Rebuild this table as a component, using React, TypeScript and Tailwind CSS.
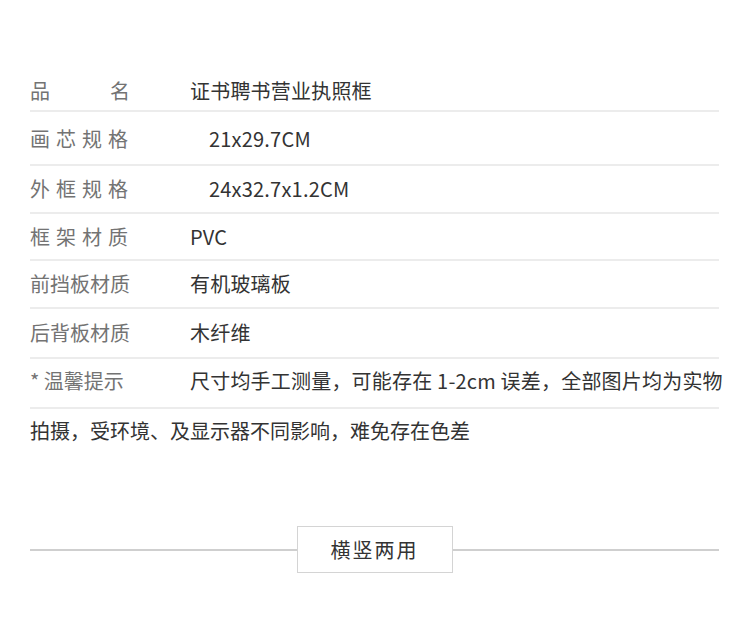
import React from "react";

const font = { fontFamily: '"Noto Sans CJK SC", "Noto Sans", sans-serif' };

type Row = { label: React.ReactNode; value: string; h: string; indent?: boolean; extra?: string };

const rows: Row[] = [
  {
    label: (
      <span className="flex w-[100px] justify-between">
        <span>品</span>
        <span>名</span>
      </span>
    ),
    value: "证书聘书营业执照框",
    h: "h-[41px]",
  },
  { label: <span className="tracking-[6px]">画芯规格</span>, value: "21x29.7CM", h: "h-[54px]", indent: true, extra: "pt-[2px]" },
  { label: <span className="tracking-[6px]">外框规格</span>, value: "24x32.7x1.2CM", h: "h-[48px]", indent: true },
  { label: <span className="tracking-[6px]">框架材质</span>, value: "PVC", h: "h-[47px]" },
  { label: <span>前挡板材质</span>, value: "有机玻璃板", h: "h-[48px]" },
  { label: <span>后背板材质</span>, value: "木纤维", h: "h-[50px]" },
  { label: <span>* 温馨提示</span>, value: "尺寸均手工测量，可能存在 1-2cm 误差，全部图片均为实物", h: "h-[50px]", extra: "pb-1" },
];

export default function App() {
  return (
    <div className="w-[750px] h-[620px] bg-white overflow-hidden" style={font}>
      <div className="ml-[30px] w-[689px] pt-[71px]">
        {rows.map((r, i) => (
          <div
            key={i}
            className={`flex items-center border-b-2 border-[#ececec] text-[20px] leading-none ${r.h} ${r.extra ?? ""}`}
          >
            <div className="w-[160px] shrink-0 text-[#737373]">{r.label}</div>
            <div className={`whitespace-nowrap text-[#333333] tracking-[0.2px] ${r.indent ? "pl-[19px]" : ""}`}>{r.value}</div>
          </div>
        ))}
        <div className="flex h-[44px] items-center text-[20px] leading-none text-[#333333]">
          拍摄，受环境、及显示器不同影响，难免存在色差
        </div>
        <div className="mt-[73px] flex items-center">
          <div className="h-[2px] flex-1 bg-[#cfcfcf]" />
          <div className="flex h-[47px] w-[156px] items-center justify-center border border-[#d4d4d4] text-[20px] leading-none tracking-[2px] text-[#333333]">
            横竖两用
          </div>
          <div className="h-[2px] flex-1 bg-[#cfcfcf]" />
        </div>
      </div>
    </div>
  );
}
